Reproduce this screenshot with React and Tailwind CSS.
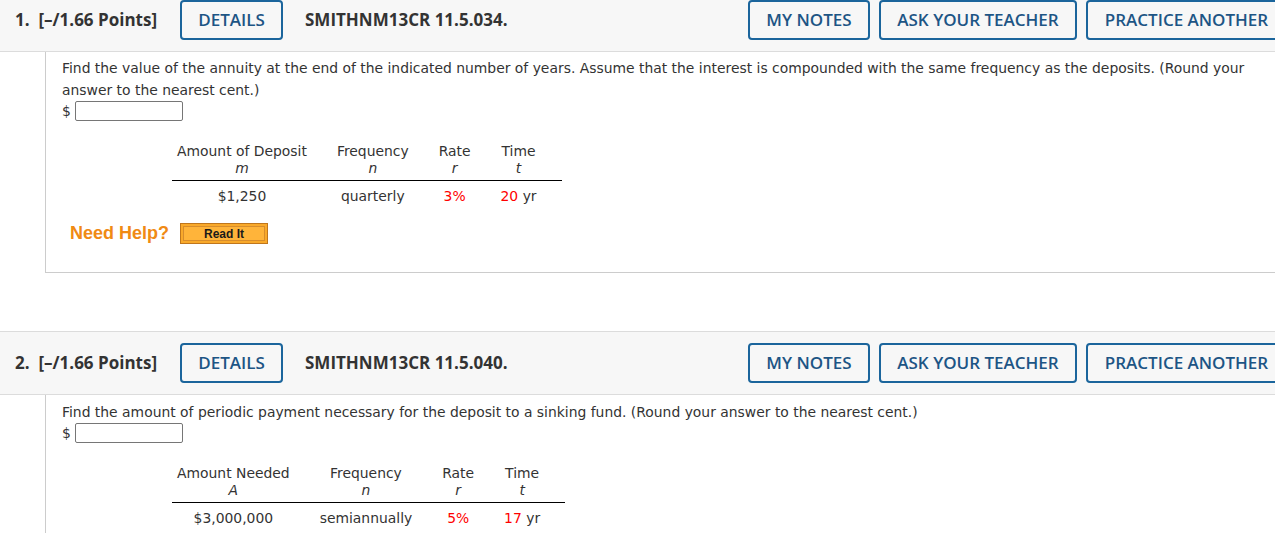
import React from 'react';

const headerFont = { fontFamily: '"Open Sans", "Liberation Sans", sans-serif' };

const QuestionHeader = ({ number, code, first }) => (
  <div
    className={`bg-[#f7f7f7] border-b border-[#dcdcdc] ${first ? 'pt-0 pb-[11px]' : 'border-t pt-[11px] pb-[11px]'}`}
    style={headerFont}
  >
    <div className="flex items-center w-[1300px] pl-[15px] pr-[13px]">
      <span className="w-[165px] text-[17px] font-bold text-[#333]">
        {number}.&nbsp;&nbsp;[–/1.66 Points]
      </span>
      <button className="w-[103px] h-[40px] border-2 border-[#1b659c] rounded-[4px] text-[17px] font-semibold text-[#1d5585]">
        DETAILS
      </button>
      <span className="ml-[22px] text-[17px] font-bold text-[#333]">{code}</span>
      <div className="ml-auto flex gap-[9px]">
        <button className="w-[122px] h-[40px] border-2 border-[#1b659c] rounded-[4px] text-[17px] font-semibold text-[#1d5585]">
          MY NOTES
        </button>
        <button className="w-[198px] h-[40px] border-2 border-[#1b659c] rounded-[4px] text-[17px] font-semibold text-[#1d5585]">
          ASK YOUR TEACHER
        </button>
        <button className="w-[201px] h-[40px] border-2 border-[#1b659c] rounded-[4px] text-[17px] font-semibold text-[#1d5585]">
          PRACTICE ANOTHER
        </button>
      </div>
    </div>
  </div>
);

const AnswerInput = () => (
  <div className="flex items-center h-[20px]">
    <span className="w-[13px]">$</span>
    <input
      type="text"
      className="w-[108px] h-[20px] border border-[#767676] rounded-[2px] bg-white"
    />
  </div>
);

const DataTable = ({ cols, values }) => (
  <table className="ml-[110px] mt-[18px] border-collapse leading-[17px] text-[#333]">
    <thead>
      <tr className="border-b-[1.5px] border-black">
        {cols.map((c, i) => (
          <th
            key={c.label}
            className={`font-normal text-center pt-[4px] pb-[3px] ${i === 0 ? 'pl-[5px] pr-[15px]' : i === cols.length - 1 ? 'pl-[15px] pr-[25px]' : 'px-[15px]'}`}
          >
            <div>{c.label}</div>
            <div className="italic">{c.sym}</div>
          </th>
        ))}
      </tr>
    </thead>
    <tbody>
      <tr>
        {values.map((v, i) => (
          <td
            key={i}
            className={`text-center pt-[7px] pb-[5px] ${i === 0 ? 'pl-[5px] pr-[15px]' : i === values.length - 1 ? 'pl-[15px] pr-[25px]' : 'px-[15px]'}`}
          >
            {v}
          </td>
        ))}
      </tr>
    </tbody>
  </table>
);

export default function App() {
  return (
    <div
      className="w-[1275px] h-[533px] overflow-hidden bg-white text-[13.9px] text-[#333]"
      style={{ fontFamily: '"DejaVu Sans", Verdana, sans-serif' }}
    >
      <QuestionHeader number={1} code="SMITHNM13CR 11.5.034." first />
      <div className="ml-[45px] border-l border-b border-[#cccccc] pl-[16px] pr-[20px] pt-[5px] pb-[25px]">
        <p className="leading-[22px]">
          Find the value of the annuity at the end of the indicated number of years. Assume that the interest is compounded with the same frequency as the deposits. (Round your answer to the nearest cent.)
        </p>
        <AnswerInput />
        <DataTable
          cols={[
            { label: 'Amount of Deposit', sym: 'm' },
            { label: 'Frequency', sym: 'n' },
            { label: 'Rate', sym: 'r' },
            { label: 'Time', sym: 't' },
          ]}
          values={[
            '$1,250',
            'quarterly',
            <span className="text-[#ff0000]">3%</span>,
            <span><span className="text-[#ff0000]">20</span> yr</span>,
          ]}
        />
        <div className="flex items-center mt-[10px] ml-[8px]">
          <span
            className="text-[18px] font-bold text-[#f08a14]"
            style={{ fontFamily: '"Liberation Sans", Arial, sans-serif' }}
          >
            Need Help?
          </span>
          <button
            className="ml-[11px] w-[88px] h-[21px] border border-[#c0761c] bg-[#ffb43a] shadow-[inset_0_0_0_2px_#f9a92a,inset_0_0_0_3px_#d78d2c] text-[12px] font-bold text-[#1a1a1a]"
            style={{ fontFamily: '"Liberation Sans", Arial, sans-serif' }}
          >
            Read It
          </button>
        </div>
      </div>
      <div className="h-[58px]" />
      <QuestionHeader number={2} code="SMITHNM13CR 11.5.040." />
      <div className="ml-[45px] border-l border-[#cccccc] pl-[16px] pr-[20px] pt-[6px] pb-[27px]">
        <p className="leading-[22px]">
          Find the amount of periodic payment necessary for the deposit to a sinking fund. (Round your answer to the nearest cent.)
        </p>
        <AnswerInput />
        <DataTable
          cols={[
            { label: 'Amount Needed', sym: 'A' },
            { label: 'Frequency', sym: 'n' },
            { label: 'Rate', sym: 'r' },
            { label: 'Time', sym: 't' },
          ]}
          values={[
            '$3,000,000',
            'semiannually',
            <span className="text-[#ff0000]">5%</span>,
            <span><span className="text-[#ff0000]">17</span> yr</span>,
          ]}
        />
      </div>
    </div>
  );
}
